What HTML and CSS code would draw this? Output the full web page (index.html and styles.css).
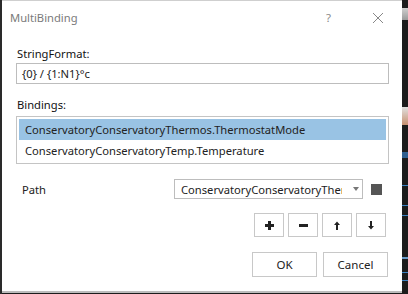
FILE: index.html
```html
<!DOCTYPE html>
<html>

<head>
    <meta charset="utf-8" />
    <title>MultiBinding</title>
    <link rel="stylesheet" href="styles.css">
</head>

<body>
    <div class="edge-left"></div>
    <div class="dialog">
        <div class="titlebar">
            <span class="title">MultiBinding</span>
            <span class="help">?</span>
            <span class="close">
                <svg width="12" height="12" viewBox="0 0 12 12">
                    <path d="M1 1 L11 11 M11 1 L1 11" stroke="#888" stroke-width="1" fill="none" />
                </svg>
            </span>
        </div>
        <div class="content">
            <p class="label first">StringFormat:</p>
            <div class="text">{0} / {1:N1}°c</div>
            <p class="label">Bindings:</p>
            <div class="list">
                <div class="item selected">ConservatoryConservatoryThermos.ThermostatMode</div>
                <div class="item">ConservatoryConservatoryTemp.Temperature</div>
            </div>
            <div class="path-row">
                <span class="path-label">Path</span>
                <div class="combo">
                    <span class="combo-text">ConservatoryConservatoryThermos.ThermostatMode</span>
                    <span class="combo-arrow">
                        <svg width="6" height="4" viewBox="0 0 6 4">
                            <path d="M0 0 L6 0 L3 4 Z" fill="#777" />
                        </svg>
                    </span>
                </div>
                <span class="square"></span>
            </div>
            <div class="tools">
                <div class="tool">
                    <svg width="11" height="11" viewBox="0 0 11 11">
                        <path d="M5.5 1 V10 M1 5.5 H10" stroke="#222" stroke-width="3" />
                    </svg>
                </div>
                <div class="tool">
                    <svg width="11" height="11" viewBox="0 0 11 11">
                        <path d="M1 5.5 H10" stroke="#222" stroke-width="3" />
                    </svg>
                </div>
                <div class="tool">
                    <svg width="6" height="9" viewBox="0 0 6 9">
                        <path d="M3 0.5 L6 4 H4 V9 H2 V4 H0 Z" fill="#222" />
                    </svg>
                </div>
                <div class="tool">
                    <svg width="6" height="9" viewBox="0 0 6 9">
                        <path d="M3 8.5 L6 5 H4 V0 H2 V5 H0 Z" fill="#222" />
                    </svg>
                </div>
            </div>
            <div class="actions">
                <div class="button">OK</div>
                <div class="button">Cancel</div>
            </div>
        </div>
    </div>
    <div class="edge-right"></div>
</body>

</html>
```

FILE: styles.css
```css
* {
    font-family: "Segoe UI", "Noto Sans", sans-serif;
    box-sizing: border-box;
}

html,
body {
    margin: 0;
    height: 294px;
    overflow: hidden;
}

body {
    display: flex;
    background-color: #1c1c1c;
}

.edge-left {
    width: 2px;
    background-color: #2a2a2a;
}

.edge-right {
    flex: 1;
    background: linear-gradient(to bottom,
            #1c1c1c 0, #1c1c1c 8px,
            #cfcfcf 8px, #9a9a9a 20px,
            #1c1c1c 20px, #1c1c1c 107px,
            #e0e0e0 107px, #c89070 125px,
            #1c1c1c 125px, #1c1c1c 152px,
            #2f5f90 152px, #2f5f90 158px,
            #1c1c1c 158px, #1c1c1c 185px,
            #3a80c0 185px, #3a80c0 186px,
            #1c1c1c 186px, #1c1c1c 205px,
            #3a80c0 205px, #3a80c0 206px,
            #1c1c1c 206px, #1c1c1c 215px,
            #3a80c0 215px, #3a80c0 216px,
            #1c1c1c 216px, #1c1c1c 257px,
            #6a9ac8 257px, #6a9ac8 259px,
            #1c1c1c 259px, #1c1c1c 272px,
            #3a80c0 272px, #3a80c0 273px,
            #1c1c1c 273px, #1c1c1c 280px,
            #3a80c0 280px, #3a80c0 281px,
            #1c1c1c 281px);
}

.dialog {
    width: 400px;
    height: 293px;
    background-color: #fff;
    border-top: 1px #cfcfcf solid;
    border-bottom: 2px #bcbcbc solid;
}

.titlebar {
    display: flex;
    align-items: center;
    height: 33px;
    padding-left: 8px;
}

.title {
    flex: 1;
    color: #7a7a7a;
    font-size: 11.2px;
}

.help {
    color: #8a8a8a;
    font-size: 11.5px;
    width: 46px;
}

.close {
    display: flex;
    width: 30px;
}

.content {
    padding: 12px 13px 0 14px;
}

.label {
    margin: 0 0 1px 1px;
    font-size: 11.2px;
    line-height: 16px;
    color: #111;
}

.text {
    height: 21px;
    border: 1px #bdbdbd solid;
    padding-left: 5px;
    font-size: 11.2px;
    line-height: 19px;
    color: #222;
    margin-bottom: 13px;
}

.list {
    height: 48px;
    border: 1px #c4c4c4 solid;
    padding: 2px;
    margin-top: 3px;
}

.item {
    height: 21px;
    line-height: 21px;
    padding-left: 6px;
    font-size: 11.2px;
    color: #222;
    white-space: nowrap;
    overflow: hidden;
}

.selected {
    background-color: #99c3e4;
}

.path-row {
    display: flex;
    align-items: center;
    margin-top: 15px;
}

.path-label {
    width: 158px;
    padding-left: 6px;
    font-size: 11.2px;
    color: #222;
}

.combo {
    display: flex;
    align-items: center;
    width: 189px;
    height: 20px;
    border: 1px #bdbdbd solid;
    padding-left: 6px;
}

.combo-text {
    flex: 1;
    font-size: 11.2px;
    color: #222;
    white-space: nowrap;
    overflow: hidden;
}

.combo-arrow {
    display: flex;
    width: 20px;
    padding-left: 11px;
}

.square {
    width: 11px;
    height: 11px;
    margin-left: 8px;
    background-color: #555;
}

.tools {
    display: flex;
    justify-content: flex-end;
    gap: 4px;
    margin: 14px 3px 0 0;
}

.tool {
    display: flex;
    align-items: center;
    justify-content: center;
    width: 30px;
    height: 24px;
    border: 1px #c8c8c8 solid;
}

.actions {
    display: flex;
    justify-content: flex-end;
    gap: 6px;
    margin: 15px 1px 0 0;
}

.button {
    width: 65px;
    height: 25px;
    border: 1px #c8c8c8 solid;
    text-align: center;
    font-size: 11.5px;
    line-height: 23px;
    color: #222;
}
```
